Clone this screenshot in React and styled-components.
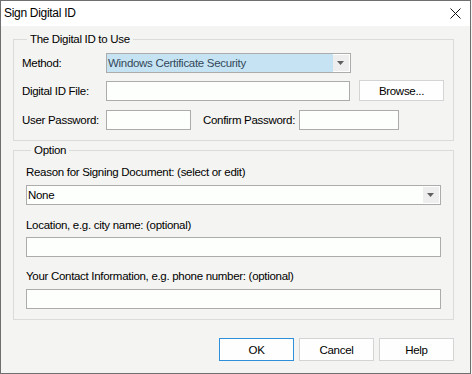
import React from "react";
import styled, { createGlobalStyle } from "styled-components";

const Global = createGlobalStyle`
  html, body { margin: 0; padding: 0; background: #f4f4f2; }
  body { font-family: "Liberation Sans", Arial, sans-serif; font-size: 11.5px; letter-spacing: -0.3px; color: #000; }
  * { box-sizing: border-box; }
`;

const Window = styled.div`
  width: 471px;
  height: 374px;
  border: 1px solid #6f6f6f;
  background: #f4f4f2;
  display: flex;
  flex-direction: column;
`;

const TitleBar = styled.div`
  height: 25px;
  background: #ffffff;
  display: flex;
  align-items: center;
  justify-content: space-between;
  padding: 0 9px 0 3px;
  flex-shrink: 0;
`;

const Title = styled.div`
  font-size: 12px;
  line-height: 16px;
  margin-top: -1px;
`;

const CloseIcon = () => (
  <svg width="11" height="11" viewBox="0 0 11 11">
    <path d="M0.5 0.5 L10.5 10.5 M10.5 0.5 L0.5 10.5" stroke="#111" strokeWidth="1" />
  </svg>
);

const Body = styled.div`
  padding: 5px 0 0 12px;
  display: flex;
  flex-direction: column;
`;

const Group = styled.fieldset`
  width: 441px;
  margin: 0 0 ${(p) => p.$mb || 0}px 0;
  border: 1px solid #dadcd9;
  padding: ${(p) => p.$pad};
  min-width: 0;
`;

const Legend = styled.legend`
  padding: 0 3px;
  margin-left: 5px;
  line-height: 16px;
`;

const Row = styled.div`
  display: flex;
  align-items: center;
  margin-top: ${(p) => p.$mt || 0}px;
`;

const Label = styled.div`
  width: ${(p) => (p.$w ? p.$w + "px" : "auto")};
  margin-left: ${(p) => p.$ml || 0}px;
  line-height: 16px;
  white-space: nowrap;
  flex-shrink: 0;
`;

const StackLabel = styled.div`
  line-height: 16px;
  margin-top: ${(p) => p.$mt || 0}px;
`;

const Input = styled.div`
  width: ${(p) => p.$w}px;
  height: 20px;
  border: 1px solid #acacac;
  background: #fdfffd;
  margin-left: ${(p) => p.$ml || 0}px;
  margin-top: ${(p) => p.$mt || 0}px;
  flex-shrink: 0;
`;

const Combo = styled.div`
  width: ${(p) => p.$w}px;
  height: 20px;
  border: 1px solid #acacac;
  background: #fdfffd;
  display: flex;
  align-items: stretch;
  margin-top: ${(p) => p.$mt || 0}px;
  flex-shrink: 0;
`;

const ComboText = styled.div`
  flex: 1;
  background: ${(p) => (p.$selected ? "#c6e3f3" : "transparent")};
  color: ${(p) => (p.$selected ? "#34495a" : "#000")};
  line-height: 18px;
  padding-left: 1px;
  white-space: nowrap;
  overflow: hidden;
`;

const ArrowBox = styled.div`
  width: 16px;
  margin: 1px 1px 1px 0;
  background: #eeeeee;
  display: flex;
  align-items: center;
  justify-content: center;
`;

const Arrow = () => (
  <svg width="8" height="5" viewBox="0 0 8 5">
    <path d="M0 0 H7 L3.5 4 Z" fill="#606060" />
  </svg>
);

const Button = styled.button`
  width: ${(p) => p.$w || 75}px;
  height: ${(p) => p.$h || 23}px;
  border: 1px solid ${(p) => (p.$default ? "#2f8fd8" : "#d4d4d4")};
  background: #fdfefd;
  font-family: inherit;
  font-size: 11.5px;
  letter-spacing: -0.3px;
  color: #000;
  padding: 0;
  margin-left: ${(p) => p.$ml || 0}px;
  flex-shrink: 0;
`;

const ButtonRow = styled.div`
  display: flex;
  justify-content: flex-end;
  gap: 5px;
  width: 441px;
  margin-top: 18px;
`;

export default function App() {
  return (
    <>
      <Global />
      <Window>
        <TitleBar>
          <Title>Sign Digital ID</Title>
          <CloseIcon />
        </TitleBar>
        <Body>
          <Group $pad="6px 8px 10px 8px" $mb={1}>
            <Legend>The Digital ID to Use</Legend>
            <Row>
              <Label $w={84}>Method:</Label>
              <Combo $w={245}>
                <ComboText $selected>Windows Certificate Security</ComboText>
                <ArrowBox><Arrow /></ArrowBox>
              </Combo>
            </Row>
            <Row $mt={7}>
              <Label $w={84}>Digital ID File:</Label>
              <Input $w={244} />
              <Button $w={85} $h={21} $ml={9}>Browse...</Button>
            </Row>
            <Row $mt={9}>
              <Label $w={84}>User Password:</Label>
              <Input $w={85} />
              <Label $w={96} $ml={12}>Confirm Password:</Label>
              <Input $w={100} />
            </Row>
          </Group>
          <Group $pad="6px 12px 10px 12px">
            <Legend>Option</Legend>
            <StackLabel>Reason for Signing Document: (select or edit)</StackLabel>
            <Combo $w={415} $mt={5}>
              <ComboText>None</ComboText>
              <ArrowBox><Arrow /></ArrowBox>
            </Combo>
            <StackLabel $mt={12}>Location, e.g. city name: (optional)</StackLabel>
            <Input $w={415} $mt={4} />
            <StackLabel $mt={11}>Your Contact Information, e.g. phone number: (optional)</StackLabel>
            <Input $w={415} $mt={5} />
          </Group>
          <ButtonRow>
            <Button $default>OK</Button>
            <Button>Cancel</Button>
            <Button>Help</Button>
          </ButtonRow>
        </Body>
      </Window>
    </>
  );
}
